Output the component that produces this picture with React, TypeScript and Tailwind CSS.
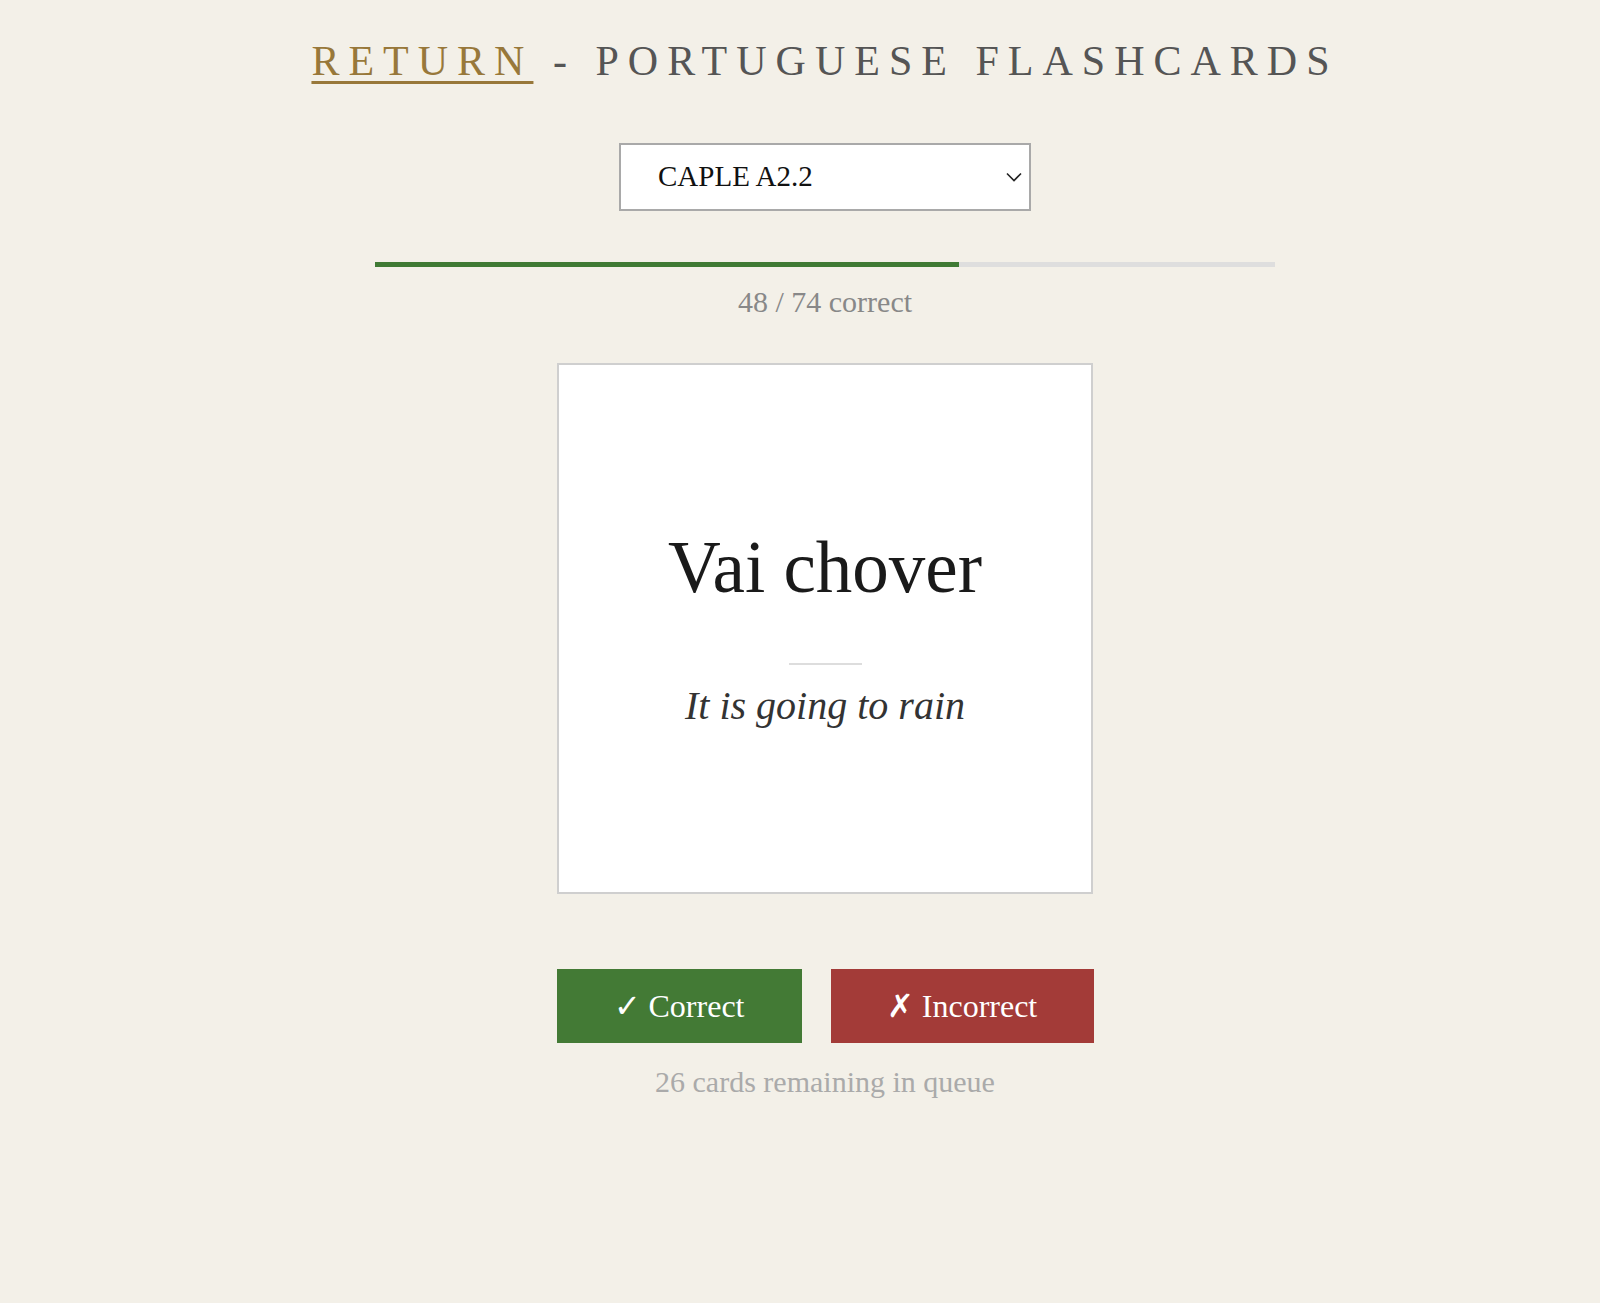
import { useState } from 'react'

const decks = ['CAPLE A2.2', 'CAPLE A2.1', 'CAPLE B1']

export default function App() {
  const [deck, setDeck] = useState(decks[0])
  const correct = 48
  const total = 74
  const remaining = total - correct
  const pct = (correct / total) * 100

  return (
    <div className="min-h-screen bg-[#f3f0e8] pl-[50px] pt-[36px] font-['Liberation_Serif',serif]">
      <div className="flex flex-col items-center">
        <h1 className="text-[42px] leading-[50px] tracking-[9px] uppercase text-[#555]">
          <a
            href="#"
            className="text-[#98783a] underline decoration-[3px] underline-offset-[6px]"
          >
            Return
          </a>{' '}
          - Portuguese Flashcards
        </h1>

        <div className="relative mt-[57px]">
          <select
            value={deck}
            onChange={(e) => setDeck(e.target.value)}
            className="appearance-none w-[412px] h-[68px] bg-white border-2 border-[#a9a9a9] pl-[37px] pr-10 text-[29px] text-[#111] outline-none"
          >
            {decks.map((d) => (
              <option key={d} value={d}>
                {d}
              </option>
            ))}
          </select>
          <svg
            className="absolute right-[9px] top-[29px] pointer-events-none"
            width="16"
            height="10"
            viewBox="0 0 16 10"
            fill="none"
          >
            <path d="M1 1.5 L8 8.5 L15 1.5" stroke="#222" strokeWidth="1.6" />
          </svg>
        </div>

        <div className="mt-[51px] w-[900px] h-[5px] bg-[#dedede]">
          <div className="h-full bg-[#3f7a34]" style={{ width: `${pct}%` }} />
        </div>
        <p className="mt-[17px] text-[30px] leading-[36px] text-[#888]">
          {correct} / {total} correct
        </p>

        <div className="mt-[43px] w-[536px] h-[531px] bg-white border-2 border-[#cfcfcf] flex flex-col items-center justify-center">
          <div className="text-[73px] leading-[80px] text-[#1a1a1a]">Vai chover</div>
          <div className="mt-[55px] w-[73px] h-[2px] bg-[#dddddd]" />
          <div className="mt-[17px] text-[40px] leading-[48px] italic text-[#333]">
            It is going to rain
          </div>
        </div>

        <div className="mt-[75px] flex gap-[29px]">
          <button
            type="button"
            className="w-[245px] h-[74px] bg-[#437a35] text-white text-[32px]"
          >
            ✓ Correct
          </button>
          <button
            type="button"
            className="w-[263px] h-[74px] bg-[#a33b38] text-white text-[32px]"
          >
            ✗ Incorrect
          </button>
        </div>

        <p className="mt-[21px] text-[30px] leading-[36px] text-[#aaa]">
          {remaining} cards remaining in queue
        </p>
      </div>
    </div>
  )
}
